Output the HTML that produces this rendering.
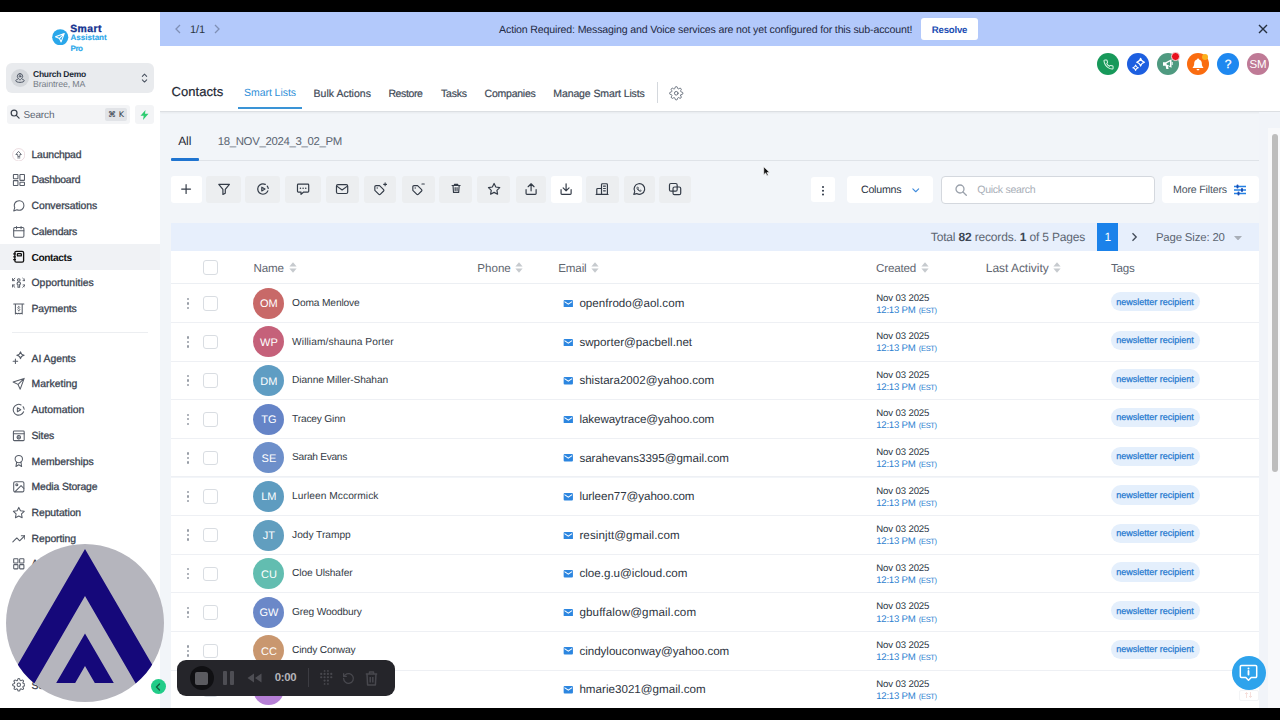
<!DOCTYPE html>
<html lang="en">
<head>
<meta charset="utf-8">
<title>Contacts</title>
<style>
*{box-sizing:border-box;margin:0;padding:0}
html,body{width:1280px;height:720px;overflow:hidden;background:#000;font-family:"Liberation Sans",sans-serif;color:#2b3544;text-rendering:geometricPrecision}
#app{position:absolute;left:0;top:0;width:1280px;height:720px;background:#f2f5f9;overflow:hidden}
.abs{position:absolute}
.t{position:absolute;line-height:1;white-space:nowrap}
.t b{color:#3c4654}
#side{position:absolute;left:0;top:0;width:160px;height:720px;background:#fff}
.navbg{position:absolute;left:0;width:160px;height:26px;background:#f0f2f5}
.ni{position:absolute;left:11.600px;width:13.600px;height:13.600px;stroke:#575d68;fill:none;stroke-width:1.850;stroke-linecap:round;stroke-linejoin:round}
#banner{position:absolute;left:160px;top:12px;width:1120px;height:34px;background:#b3c9fb}
#hdr{position:absolute;left:160px;top:46px;width:1120px;height:65.600px;background:#fff;border-bottom:1px solid #dcdfe3;box-shadow:0 1px 2px rgba(0,0,0,.05)}
.circ{position:absolute;top:52.700px;width:22.600px;height:22.600px;border-radius:50%}
.tb{position:absolute;top:176.300px;height:26.600px;background:#eceef0;border-radius:3px}
.tb.w{background:#fff}
.tb.r{top:175.600px;height:27.900px;border-radius:4px}
.tb svg{position:absolute;left:50%;top:50%;width:14.200px;height:14.200px;margin:-7.800px 0 0 -7.100px;stroke:#333b47;fill:none;stroke-width:2;stroke-linecap:round;stroke-linejoin:round}
.row{position:absolute;left:171px;width:1088px;height:38.620px;background:#fff;border-bottom:1px solid #eef0f4}
.av{position:absolute;left:253.400px;width:31px;height:31px;border-radius:50%}
.mi{position:absolute;left:563.100px;width:10.600px;height:7.600px}
.tg{position:absolute;left:1111px;width:88.800px;height:19.400px;border-radius:10px;background:#e4effc}
.cb{position:absolute;width:14.500px;height:14.500px;border:1px solid #d9dde2;border-radius:3px;background:#fff}
.dots{position:absolute;left:187px;width:3px}
.dots i{display:block;width:2.400px;height:2.400px;border-radius:50%;background:#979da6;margin-bottom:2.100px}
</style>
</head>
<body>
<div id="app">

<div id="banner"></div>
<svg class="abs" style="left:174px;top:24px" width="8" height="10" viewBox="0 0 8 10"><path d="M6 1L2 5l4 4" stroke="#7f8fb5" stroke-width="1.300" fill="none"/></svg>
<div id="t75" class="t" style="left:190px;top:25px;font-size:11px;color:#2b3544;letter-spacing:-0.14px;">1/1</div>
<svg class="abs" style="left:213px;top:24px" width="8" height="10" viewBox="0 0 8 10"><path d="M2 1l4 4-4 4" stroke="#7f8fb5" stroke-width="1.300" fill="none"/></svg>
<div id="t76" class="t" style="left:499.1px;top:25px;font-size:10.6px;color:#1f2a44;letter-spacing:-0.16px;">Action Required: Messaging and Voice services are not yet configured for this sub-account!</div>
<div class="abs" style="left:920.8px;top:17.700px;width:57.700px;height:22.700px;border-radius:3px;background:#fff"></div>
<div id="t77" class="t" style="left:931.8px;top:26px;font-size:9.6px;color:#1b4db3;font-weight:bold;letter-spacing:-0.19px;">Resolve</div>
<svg class="abs" style="left:1258px;top:24px" width="10" height="10" viewBox="0 0 10 10"><path d="M1 1l8 8M9 1L1 9" stroke="#26303f" stroke-width="1.400" fill="none"/></svg>
<div id="hdr"></div>
<div id="t78" class="t" style="left:171.6px;top:85px;font-size:13px;color:#1d2733;letter-spacing:0.04px;-webkit-text-stroke:.2px #1d2733;">Contacts</div>
<div id="t79" class="t" style="left:244px;top:88px;font-size:10.5px;color:#2f8fd8;letter-spacing:-0.05px;">Smart Lists</div>
<div class="abs" style="left:238.400px;top:107.400px;width:63.600px;height:2px;background:#3a94d6"></div>
<div id="t80" class="t" style="left:313.6px;top:89px;font-size:10.5px;color:#414a57;letter-spacing:0.01px;-webkit-text-stroke:.2px #414a57;">Bulk Actions</div>
<div id="t81" class="t" style="left:388.4px;top:89px;font-size:10.5px;color:#414a57;letter-spacing:-0.37px;-webkit-text-stroke:.2px #414a57;">Restore</div>
<div id="t82" class="t" style="left:440.9px;top:89px;font-size:10.5px;color:#414a57;letter-spacing:-0.16px;-webkit-text-stroke:.2px #414a57;">Tasks</div>
<div id="t83" class="t" style="left:484.6px;top:89px;font-size:10.5px;color:#414a57;letter-spacing:-0.24px;-webkit-text-stroke:.2px #414a57;">Companies</div>
<div id="t84" class="t" style="left:553.3px;top:89px;font-size:10.5px;color:#414a57;letter-spacing:-0.11px;-webkit-text-stroke:.2px #414a57;">Manage Smart Lists</div>
<div class="abs" style="left:657px;top:82px;width:1px;height:21px;background:#d4d8dd"></div>
<svg class="abs" style="left:669px;top:86px" width="14.500" height="14.500" viewBox="0 0 24 24" fill="none" stroke="#666e7a" stroke-width="1.600" stroke-linecap="round" stroke-linejoin="round"><circle cx="12" cy="12" r="3"/><path d="M19.400 15a1.650 1.650 0 0 0 .330 1.820l.060.060a2 2 0 1 1-2.830 2.830l-.060-.060a1.650 1.650 0 0 0-1.820-.330 1.650 1.650 0 0 0-1 1.510V21a2 2 0 0 1-4 0v-.090A1.650 1.650 0 0 0 9 19.400a1.650 1.650 0 0 0-1.820.330l-.060.060a2 2 0 1 1-2.830-2.830l.060-.060a1.650 1.650 0 0 0 .330-1.820 1.650 1.650 0 0 0-1.510-1H3a2 2 0 0 1 0-4h.090A1.650 1.650 0 0 0 4.600 9a1.650 1.650 0 0 0-.330-1.820l-.060-.060a2 2 0 1 1 2.830-2.830l.060.060a1.650 1.650 0 0 0 1.820.330H9a1.650 1.650 0 0 0 1-1.510V3a2 2 0 0 1 4 0v.090a1.650 1.650 0 0 0 1 1.510 1.650 1.650 0 0 0 1.820-.330l.060-.060a2 2 0 1 1 2.830 2.830l-.060.060a1.650 1.650 0 0 0-.330 1.820V9a1.650 1.650 0 0 0 1.510 1H21a2 2 0 0 1 0 4h-.090a1.650 1.650 0 0 0-1.510 1z"/></svg>
<div class="circ" style="left:1096.500px;background:#17995a"></div>
<svg class="abs" style="left:1102.500px;top:58.500px" width="11" height="11" viewBox="0 0 24 24" fill="none" stroke="#d9f5e5" stroke-width="2.200" stroke-linecap="round" stroke-linejoin="round"><path d="M22 16.920v3a2 2 0 0 1-2.180 2 19.790 19.790 0 0 1-8.630-3.070 19.500 19.500 0 0 1-6-6 19.790 19.790 0 0 1-3.070-8.670A2 2 0 0 1 4.110 2h3a2 2 0 0 1 2 1.720c.127.960.361 1.903.700 2.810a2 2 0 0 1-.450 2.110L8.090 9.910a16 16 0 0 0 6 6l1.270-1.270a2 2 0 0 1 2.110-.450c.907.339 1.850.573 2.810.700A2 2 0 0 1 22 16.920z"/></svg>
<div class="circ" style="left:1126.500px;background:#1d5fe0"></div>
<svg class="abs" style="left:1130.500px;top:56.500px" width="15" height="15" viewBox="0 0 15 15" fill="none" stroke="#fff" stroke-width="1.100" stroke-linejoin="round"><path d="M9.600 1.200c.5 2.600 1.400 3.500 4 4-2.600.5-3.500 1.400-4 4-.5-2.600-1.400-3.500-4-4 2.600-.5 3.500-1.400 4-4z"/><path d="M4.600 8c.35 1.800.95 2.400 2.750 2.750-1.800.35-2.400.95-2.750 2.750-.35-1.800-.95-2.400-2.750-2.750C3.650 10.400 4.250 9.800 4.600 8z"/></svg>
<div class="circ" style="left:1156.500px;background:#4f9a80"></div>
<svg class="abs" style="left:1162px;top:58px" width="12" height="12" viewBox="0 0 12 12" fill="#fff" stroke="none"><path d="M1 4.200h2.600L9.500 1.300v8.400L6 8l.600 3H4.300L3.600 7.800H1z"/><path d="M4.600 5.200L8 3.600v4.300L4.600 6.500z" fill="#4f9a80"/><path d="M10.200 4v3" stroke="#fff" stroke-width="1" fill="none"/></svg>
<div class="circ" style="left:1186.500px;background:#fa6c10"></div>
<svg class="abs" style="left:1192px;top:57.500px" width="12" height="13" viewBox="0 0 12 13" fill="#fff"><path d="M6 0.500c.600 0 1 .400 1 .900 1.800.500 2.800 2 2.800 3.900 0 2.300.600 3.300 1.500 4.100v.700H.700v-.700c.900-.800 1.500-1.800 1.500-4.100 0-1.900 1-3.400 2.800-3.900 0-.500.400-.900 1-.900z"/><rect x="4.600" y="11" width="2.800" height="1.200" rx=".6"/></svg>
<div class="circ" style="left:1216.500px;background:#1e88f0"></div>
<div class="circ" style="left:1246.500px;background:#bf7a96"></div>
<div class="abs" style="left:1171.300px;top:52.200px;width:8.400px;height:8.400px;border-radius:50%;background:#e8101c;border:.6px solid #f6d9dc"></div>
<div class="abs" style="left:1201.800px;top:54px;width:6px;height:6px;border-radius:50%;background:#fbb01c"></div>
<div id="t123" class="t" style="left:1224.7px;top:58px;font-size:12px;color:#fff;-webkit-text-stroke:.3px #fff;">?</div>
<div id="t124" class="t" style="left:1249.5px;top:60px;font-size:11.5px;color:#fff;letter-spacing:-0.25px;">SM</div>

<!-- list tabs -->
<div id="t85" class="t" style="left:178.2px;top:135px;font-size:12px;color:#1d2733;letter-spacing:-0.07px;">All</div>
<div id="t86" class="t" style="left:217.7px;top:137px;font-size:11.4px;color:#5b6572;letter-spacing:-0.33px;">18_NOV_2024_3_02_PM</div>
<div class="abs" style="left:171px;top:160px;width:1088px;height:1px;background:#dfe3e8"></div>
<div class="abs" style="left:171px;top:157.500px;width:28px;height:3px;background:#1f74d0;border-radius:1px"></div>
<div class="tb w" style="left:171.0px;width:30.5px"><svg viewBox="0 0 24 24"><path d="M12 4.500v15M4.500 12h15"/></svg></div>
<div class="tb" style="left:206.4px;width:34.6px"><svg viewBox="0 0 24 24"><path d="M3 4h18l-7 8.500v6.500l-4 2v-8.500z"/></svg></div>
<div class="tb" style="left:245.3px;width:34.7px"><svg viewBox="0 0 24 24"><path d="M20 15A8.800 8.800 0 1 1 15.700 4"/><path d="M9.800 8.800v6.400l5.400-3.200z"/><path d="M19 6.800a8.800 8.800 0 0 1 1.700 4"/></svg></div>
<div class="tb" style="left:284.7px;width:36.1px"><svg viewBox="0 0 24 24"><path d="M4 3.500h16a1.500 1.500 0 0 1 1.500 1.500v10.500a1.500 1.500 0 0 1-1.500 1.500h-7l-4.500 4v-4H4a1.500 1.500 0 0 1-1.500-1.500V5A1.500 1.500 0 0 1 4 3.500z"/><path d="M7.500 10.500h.01M12 10.500h.01M16.500 10.500h.01" stroke-width="2.600"/></svg></div>
<div class="tb" style="left:325.6px;width:33.1px"><svg viewBox="0 0 24 24"><rect x="2.500" y="4.500" width="19" height="15" rx="2.500"/><path d="M3 7l9 6.500L21 7"/></svg></div>
<div class="tb" style="left:363.5px;width:32.5px"><svg viewBox="0 0 24 24"><g transform="translate(1.500 4.500) scale(.8)"><path d="M20.590 13.410l-7.170 7.170a2 2 0 0 1-2.830 0L2 12V4.500A2.500 2.500 0 0 1 4.500 2H12l8.590 8.590a2 2 0 0 1 0 2.820z" stroke-width="2.400"/><path d="M7 7h.01" stroke-width="2.800"/></g><path d="M20.500 1.500v5M18 4h5" stroke-width="1.800"/></svg></div>
<div class="tb" style="left:401.8px;width:32.8px"><svg viewBox="0 0 24 24"><g transform="translate(1.500 4.500) scale(.8)"><path d="M20.590 13.410l-7.170 7.170a2 2 0 0 1-2.830 0L2 12V4.500A2.500 2.500 0 0 1 4.500 2H12l8.590 8.590a2 2 0 0 1 0 2.820z" stroke-width="2.400"/><path d="M7 7h.01" stroke-width="2.800"/></g><path d="M18.500 3.500h4" stroke-width="1.800"/></svg></div>
<div class="tb" style="left:439.3px;width:33.2px"><svg viewBox="0 0 24 24"><g transform="translate(2.400 1.200) scale(.8)"><path d="M3.500 6h17M8.500 6V3.500h7V6M5.500 6l1 14.500h11l1-14.500M10 10.500v6M14 10.500v6" stroke-width="2.400"/></g></svg></div>
<div class="tb" style="left:477.3px;width:32.7px"><svg viewBox="0 0 24 24"><path d="M12 2.500l2.950 5.980 6.600.960-4.780 4.650 1.130 6.570L12 17.560l-5.900 3.100 1.130-6.570L2.450 9.440l6.600-.960z"/></svg></div>
<div class="tb" style="left:515.6px;width:30.2px"><svg viewBox="0 0 24 24"><path d="M3.500 13v6.500a1.500 1.500 0 0 0 1.500 1.500h14a1.500 1.500 0 0 0 1.500-1.500V13M12 15V3M7 8l5-5 5 5"/></svg></div>
<div class="tb w" style="left:550.6px;width:31.4px"><svg viewBox="0 0 24 24"><path d="M3.500 13v6.500a1.500 1.500 0 0 0 1.500 1.500h14a1.500 1.500 0 0 0 1.500-1.500V13M12 3v12M7 10l5 5 5-5"/></svg></div>
<div class="tb" style="left:586.0px;width:33.0px"><svg viewBox="0 0 24 24"><path d="M11 21V4.500A1.500 1.500 0 0 1 12.500 3h7A1.500 1.500 0 0 1 21 4.500V21M3 21V12.500A1.500 1.500 0 0 1 4.500 11H11M2 21h20M14.500 7h3M14.500 11h3M14.500 15h3"/></svg></div>
<div class="tb" style="left:623.5px;width:31.1px"><svg viewBox="0 0 24 24"><path d="M3 21l1.650-4.800A9 9 0 1 1 8 19.600z"/><path d="M9 8.500c-.300 0-.800.400-.800 1.500 0 2 3 5.500 5.800 5.800 1 .1 1.700-.500 1.700-1.200l-1.900-1-.900.800c-1.200-.500-2.300-1.600-2.800-2.800l.800-.900z" stroke-width="1.300"/></svg></div>
<div class="tb" style="left:659.0px;width:31.7px"><svg viewBox="0 0 24 24"><rect x="8.500" y="8.500" width="13" height="13" rx="2.500"/><rect x="2.500" y="2.500" width="13" height="13" rx="2.500"/></svg></div>
<div class="tb w" style="left:810.800px;width:24.500px;top:177px;height:25px"><div class="abs" style="left:11.300px;top:9px;width:2.400px;height:2.400px;border-radius:50%;background:#2b3544;box-shadow:0 3.800px 0 #2b3544,0 7.600px 0 #2b3544"></div></div>
<div class="tb w r" style="left:846.500px;width:86.300px"><svg class="abs" style="left:65.500px;top:12px;margin:0;width:7.500px;height:5px;stroke:#3f8bdc;stroke-width:1.300" viewBox="0 0 9 6"><path d="M1 1l3.500 3.500L8 1"/></svg></div>
<div class="abs" style="left:940.500px;top:175.500px;width:214px;height:28.500px;background:#fff;border:1px solid #d4d8de;border-radius:4px"></div>
<svg class="abs" style="left:955px;top:184px" width="12" height="12" viewBox="0 0 12 12" fill="none" stroke="#9aa1ab" stroke-width="1.300" stroke-linecap="round"><circle cx="5" cy="5" r="4"/><path d="M8 8l3.300 3.300"/></svg>
<div class="tb w r" style="left:1162.300px;width:96.500px"><svg class="abs" style="left:72px;top:8px;margin:0;width:12px;height:12px;stroke:#2380e4;stroke-width:1.600" viewBox="0 0 12 12"><path d="M0.500 2.500h11M0.500 6h11M0.500 9.500h11"/><path d="M3.500 1.500v2M8 5v2M4.500 8.500v2" stroke="#1b4db3" stroke-width="2"/></svg></div>
<div id="t87" class="t" style="left:861px;top:185px;font-size:10.6px;color:#2b3544;letter-spacing:-0.22px;">Columns</div>
<div id="t88" class="t" style="left:977.2px;top:185px;font-size:10.6px;color:#a9afb8;letter-spacing:-0.30px;">Quick search</div>
<div id="t89" class="t" style="left:1173px;top:185px;font-size:10.6px;color:#4a5361;letter-spacing:-0.17px;">More Filters</div>
<!-- pager -->
<div class="abs" style="left:171px;top:222.600px;width:1088px;height:28.600px;background:#e7effc"></div>
<div id="t90" class="t" style="left:930.8px;top:231px;font-size:12px;color:#5b6572;letter-spacing:-0.17px;">Total <b>82</b> records. <b>1</b> of 5 Pages</div>
<div class="abs" style="left:1097.400px;top:222.600px;width:20.500px;height:28.600px;background:#1b82ea"></div>
<div id="t91" class="t" style="left:1104.4px;top:231px;font-size:12px;color:#fff;">1</div>
<svg class="abs" style="left:1130.500px;top:232px" width="7" height="10" viewBox="0 0 7 10"><path d="M1.500 1.300l3.700 3.700-3.700 3.700" stroke="#424b58" stroke-width="1.350" fill="none"/></svg>
<div id="t92" class="t" style="left:1155.9px;top:233px;font-size:11.4px;color:#5b6572;letter-spacing:-0.16px;">Page Size: 20</div>
<svg class="abs" style="left:1233.500px;top:235.500px" width="8" height="4.500" viewBox="0 0 8 4.500"><path d="M0 0h8L4 4.500z" fill="#a9afb8"/></svg>
<!-- table head -->
<div class="abs" style="left:171px;top:251px;width:1088px;height:33.400px;background:#fff;border-bottom:1px solid #eceff3"></div>
<div class="cb" style="left:203.300px;top:260.100px"></div>
<div id="t93" class="t" style="left:253.5px;top:263px;font-size:11.6px;color:#5f6670;letter-spacing:-0.14px;">Name</div><svg class="abs" style="left:288.5px;top:262px" width="8" height="11" viewBox="0 0 8 11"><path d="M4 0.300L7.600 4.600H0.400z" fill="#c6cace"/><path d="M4 10.700L7.600 6.400H0.400z" fill="#c6cace"/></svg>
<div id="t94" class="t" style="left:477.3px;top:263px;font-size:11.6px;color:#5f6670;letter-spacing:-0.01px;">Phone</div><svg class="abs" style="left:514.5px;top:262px" width="8" height="11" viewBox="0 0 8 11"><path d="M4 0.300L7.600 4.600H0.400z" fill="#c6cace"/><path d="M4 10.700L7.600 6.400H0.400z" fill="#c6cace"/></svg>
<div id="t95" class="t" style="left:558.2px;top:263px;font-size:11.6px;color:#5f6670;letter-spacing:-0.12px;">Email</div><svg class="abs" style="left:591px;top:262px" width="8" height="11" viewBox="0 0 8 11"><path d="M4 0.300L7.600 4.600H0.400z" fill="#c6cace"/><path d="M4 10.700L7.600 6.400H0.400z" fill="#c6cace"/></svg>
<div id="t96" class="t" style="left:876.1px;top:263px;font-size:11.6px;color:#5f6670;letter-spacing:-0.18px;">Created</div><svg class="abs" style="left:921.2px;top:262px" width="8" height="11" viewBox="0 0 8 11"><path d="M4 0.300L7.600 4.600H0.400z" fill="#c6cace"/><path d="M4 10.700L7.600 6.400H0.400z" fill="#c6cace"/></svg>
<div id="t97" class="t" style="left:985.8px;top:262px;font-size:12px;color:#5f6670;letter-spacing:-0.04px;">Last Activity</div><svg class="abs" style="left:1053px;top:262px" width="8" height="11" viewBox="0 0 8 11"><path d="M4 0.300L7.600 4.600H0.400z" fill="#c6cace"/><path d="M4 10.700L7.600 6.400H0.400z" fill="#c6cace"/></svg>
<div id="t98" class="t" style="left:1110.9px;top:263px;font-size:11.6px;color:#5b6572;letter-spacing:-0.16px;">Tags</div>
<div class="row" style="top:284.40px"></div><div class="dots" style="top:297.70px"><i></i><i></i><i></i></div><div class="cb" style="left:203.3px;top:296.20px"></div><div class="av" style="top:287.80px;background:#c86968"></div><div id="t1" class="t" style="left:253.4px;top:299px;font-size:11px;color:#fff;width:31px;text-align:center;">OM</div><div id="t2" class="t" style="left:292.1px;top:299px;font-size:10.2px;color:#343b46;letter-spacing:-0.13px;">Ooma Menlove</div><svg class="mi" style="top:299.90px" viewBox="0 0 11 9"><rect width="11" height="9" rx="1.2" fill="#2c86e0"/><path d="M1 2l4.5 3L10 2" stroke="#fff" stroke-width="1.2" fill="none"/></svg><div id="t3" class="t" style="left:579.4px;top:298px;font-size:11.6px;color:#2d343e;letter-spacing:0.02px;">openfrodo@aol.com</div><div id="t4" class="t" style="left:876.2px;top:294px;font-size:9.6px;color:#2b3544;letter-spacing:-0.12px;">Nov 03 2025</div><div id="t5" class="t" style="left:876.2px;top:306px;font-size:9.6px;color:#2e7fd0;letter-spacing:-0.23px;">12:13 PM</div><div id="t6" class="t" style="left:918.8px;top:307px;font-size:7.6px;color:#2e7fd0;letter-spacing:-0.38px;">(EST)</div><div class="tg" style="top:292.10px"></div><div id="t7" class="t" style="left:1116.3px;top:298px;font-size:9px;color:#2579cf;-webkit-text-stroke:.25px #2579cf;">newsletter recipient</div>
<div class="row" style="top:323.02px"></div><div class="dots" style="top:336.32px"><i></i><i></i><i></i></div><div class="cb" style="left:203.3px;top:334.82px"></div><div class="av" style="top:326.42px;background:#c5617a"></div><div id="t8" class="t" style="left:253.4px;top:338px;font-size:11px;color:#fff;width:31px;text-align:center;">WP</div><div id="t9" class="t" style="left:292.1px;top:338px;font-size:10.2px;color:#343b46;letter-spacing:0.09px;">William/shauna Porter</div><svg class="mi" style="top:338.52px" viewBox="0 0 11 9"><rect width="11" height="9" rx="1.2" fill="#2c86e0"/><path d="M1 2l4.5 3L10 2" stroke="#fff" stroke-width="1.2" fill="none"/></svg><div id="t10" class="t" style="left:579.4px;top:337px;font-size:11.6px;color:#2d343e;letter-spacing:0.02px;">swporter@pacbell.net</div><div id="t11" class="t" style="left:876.2px;top:332px;font-size:9.6px;color:#2b3544;letter-spacing:-0.12px;">Nov 03 2025</div><div id="t12" class="t" style="left:876.2px;top:344px;font-size:9.6px;color:#2e7fd0;letter-spacing:-0.23px;">12:13 PM</div><div id="t13" class="t" style="left:918.8px;top:345px;font-size:7.6px;color:#2e7fd0;letter-spacing:-0.38px;">(EST)</div><div class="tg" style="top:330.72px"></div><div id="t14" class="t" style="left:1116.3px;top:336px;font-size:9px;color:#2579cf;-webkit-text-stroke:.25px #2579cf;">newsletter recipient</div>
<div class="row" style="top:361.64px"></div><div class="dots" style="top:374.94px"><i></i><i></i><i></i></div><div class="cb" style="left:203.3px;top:373.44px"></div><div class="av" style="top:365.04px;background:#5f9dc3"></div><div id="t15" class="t" style="left:253.4px;top:377px;font-size:11px;color:#fff;width:31px;text-align:center;">DM</div><div id="t16" class="t" style="left:292.1px;top:376px;font-size:10.2px;color:#343b46;letter-spacing:-0.10px;">Dianne Miller-Shahan</div><svg class="mi" style="top:377.14px" viewBox="0 0 11 9"><rect width="11" height="9" rx="1.2" fill="#2c86e0"/><path d="M1 2l4.5 3L10 2" stroke="#fff" stroke-width="1.2" fill="none"/></svg><div id="t17" class="t" style="left:579.4px;top:375px;font-size:11.6px;color:#2d343e;letter-spacing:-0.01px;">shistara2002@yahoo.com</div><div id="t18" class="t" style="left:876.2px;top:371px;font-size:9.6px;color:#2b3544;letter-spacing:-0.12px;">Nov 03 2025</div><div id="t19" class="t" style="left:876.2px;top:383px;font-size:9.6px;color:#2e7fd0;letter-spacing:-0.23px;">12:13 PM</div><div id="t20" class="t" style="left:918.8px;top:384px;font-size:7.6px;color:#2e7fd0;letter-spacing:-0.38px;">(EST)</div><div class="tg" style="top:369.34px"></div><div id="t21" class="t" style="left:1116.3px;top:375px;font-size:9px;color:#2579cf;-webkit-text-stroke:.25px #2579cf;">newsletter recipient</div>
<div class="row" style="top:400.26px"></div><div class="dots" style="top:413.56px"><i></i><i></i><i></i></div><div class="cb" style="left:203.3px;top:412.06px"></div><div class="av" style="top:403.66px;background:#6584c7"></div><div id="t22" class="t" style="left:253.4px;top:415px;font-size:11px;color:#fff;width:31px;text-align:center;">TG</div><div id="t23" class="t" style="left:292.1px;top:415px;font-size:10.2px;color:#343b46;letter-spacing:-0.19px;">Tracey Ginn</div><svg class="mi" style="top:415.76px" viewBox="0 0 11 9"><rect width="11" height="9" rx="1.2" fill="#2c86e0"/><path d="M1 2l4.5 3L10 2" stroke="#fff" stroke-width="1.2" fill="none"/></svg><div id="t24" class="t" style="left:579.4px;top:414px;font-size:11.6px;color:#2d343e;letter-spacing:-0.06px;">lakewaytrace@yahoo.com</div><div id="t25" class="t" style="left:876.2px;top:409px;font-size:9.6px;color:#2b3544;letter-spacing:-0.12px;">Nov 03 2025</div><div id="t26" class="t" style="left:876.2px;top:421px;font-size:9.6px;color:#2e7fd0;letter-spacing:-0.23px;">12:13 PM</div><div id="t27" class="t" style="left:918.8px;top:422px;font-size:7.6px;color:#2e7fd0;letter-spacing:-0.38px;">(EST)</div><div class="tg" style="top:407.96px"></div><div id="t28" class="t" style="left:1116.3px;top:413px;font-size:9px;color:#2579cf;-webkit-text-stroke:.25px #2579cf;">newsletter recipient</div>
<div class="row" style="top:438.88px"></div><div class="dots" style="top:452.18px"><i></i><i></i><i></i></div><div class="cb" style="left:203.3px;top:450.68px"></div><div class="av" style="top:442.28px;background:#6d8fca"></div><div id="t29" class="t" style="left:253.4px;top:454px;font-size:11px;color:#fff;width:31px;text-align:center;">SE</div><div id="t30" class="t" style="left:292.1px;top:453px;font-size:10.2px;color:#343b46;letter-spacing:-0.31px;">Sarah Evans</div><svg class="mi" style="top:454.38px" viewBox="0 0 11 9"><rect width="11" height="9" rx="1.2" fill="#2c86e0"/><path d="M1 2l4.5 3L10 2" stroke="#fff" stroke-width="1.2" fill="none"/></svg><div id="t31" class="t" style="left:579.4px;top:453px;font-size:11.6px;color:#2d343e;letter-spacing:-0.03px;">sarahevans3395@gmail.com</div><div id="t32" class="t" style="left:876.2px;top:448px;font-size:9.6px;color:#2b3544;letter-spacing:-0.12px;">Nov 03 2025</div><div id="t33" class="t" style="left:876.2px;top:460px;font-size:9.6px;color:#2e7fd0;letter-spacing:-0.23px;">12:13 PM</div><div id="t34" class="t" style="left:918.8px;top:461px;font-size:7.6px;color:#2e7fd0;letter-spacing:-0.38px;">(EST)</div><div class="tg" style="top:446.58px"></div><div id="t35" class="t" style="left:1116.3px;top:452px;font-size:9px;color:#2579cf;-webkit-text-stroke:.25px #2579cf;">newsletter recipient</div>
<div class="row" style="top:477.50px"></div><div class="dots" style="top:490.80px"><i></i><i></i><i></i></div><div class="cb" style="left:203.3px;top:489.30px"></div><div class="av" style="top:480.90px;background:#5e9cc0"></div><div id="t36" class="t" style="left:253.4px;top:492px;font-size:11px;color:#fff;width:31px;text-align:center;">LM</div><div id="t37" class="t" style="left:292.1px;top:492px;font-size:10.2px;color:#343b46;letter-spacing:0.05px;">Lurleen Mccormick</div><svg class="mi" style="top:493.00px" viewBox="0 0 11 9"><rect width="11" height="9" rx="1.2" fill="#2c86e0"/><path d="M1 2l4.5 3L10 2" stroke="#fff" stroke-width="1.2" fill="none"/></svg><div id="t38" class="t" style="left:579.4px;top:491px;font-size:11.6px;color:#2d343e;letter-spacing:-0.06px;">lurleen77@yahoo.com</div><div id="t39" class="t" style="left:876.2px;top:487px;font-size:9.6px;color:#2b3544;letter-spacing:-0.12px;">Nov 03 2025</div><div id="t40" class="t" style="left:876.2px;top:499px;font-size:9.6px;color:#2e7fd0;letter-spacing:-0.23px;">12:13 PM</div><div id="t41" class="t" style="left:918.8px;top:500px;font-size:7.6px;color:#2e7fd0;letter-spacing:-0.38px;">(EST)</div><div class="tg" style="top:485.20px"></div><div id="t42" class="t" style="left:1116.3px;top:491px;font-size:9px;color:#2579cf;-webkit-text-stroke:.25px #2579cf;">newsletter recipient</div>
<div class="row" style="top:516.12px"></div><div class="dots" style="top:529.42px"><i></i><i></i><i></i></div><div class="cb" style="left:203.3px;top:527.92px"></div><div class="av" style="top:519.52px;background:#619ebf"></div><div id="t43" class="t" style="left:253.4px;top:531px;font-size:11px;color:#fff;width:31px;text-align:center;">JT</div><div id="t44" class="t" style="left:292.1px;top:531px;font-size:10.2px;color:#343b46;letter-spacing:-0.03px;">Jody Trampp</div><svg class="mi" style="top:531.62px" viewBox="0 0 11 9"><rect width="11" height="9" rx="1.2" fill="#2c86e0"/><path d="M1 2l4.5 3L10 2" stroke="#fff" stroke-width="1.2" fill="none"/></svg><div id="t45" class="t" style="left:579.4px;top:530px;font-size:11.6px;color:#2d343e;letter-spacing:0.09px;">resinjtt@gmail.com</div><div id="t46" class="t" style="left:876.2px;top:525px;font-size:9.6px;color:#2b3544;letter-spacing:-0.12px;">Nov 03 2025</div><div id="t47" class="t" style="left:876.2px;top:537px;font-size:9.6px;color:#2e7fd0;letter-spacing:-0.23px;">12:13 PM</div><div id="t48" class="t" style="left:918.8px;top:538px;font-size:7.6px;color:#2e7fd0;letter-spacing:-0.38px;">(EST)</div><div class="tg" style="top:523.82px"></div><div id="t49" class="t" style="left:1116.3px;top:529px;font-size:9px;color:#2579cf;-webkit-text-stroke:.25px #2579cf;">newsletter recipient</div>
<div class="row" style="top:554.74px"></div><div class="dots" style="top:568.04px"><i></i><i></i><i></i></div><div class="cb" style="left:203.3px;top:566.54px"></div><div class="av" style="top:558.14px;background:#62bdb0"></div><div id="t50" class="t" style="left:253.4px;top:570px;font-size:11px;color:#fff;width:31px;text-align:center;">CU</div><div id="t51" class="t" style="left:292.1px;top:569px;font-size:10.2px;color:#343b46;letter-spacing:-0.10px;">Cloe Ulshafer</div><svg class="mi" style="top:570.24px" viewBox="0 0 11 9"><rect width="11" height="9" rx="1.2" fill="#2c86e0"/><path d="M1 2l4.5 3L10 2" stroke="#fff" stroke-width="1.2" fill="none"/></svg><div id="t52" class="t" style="left:579.4px;top:568px;font-size:11.6px;color:#2d343e;letter-spacing:0.01px;">cloe.g.u@icloud.com</div><div id="t53" class="t" style="left:876.2px;top:564px;font-size:9.6px;color:#2b3544;letter-spacing:-0.12px;">Nov 03 2025</div><div id="t54" class="t" style="left:876.2px;top:576px;font-size:9.6px;color:#2e7fd0;letter-spacing:-0.23px;">12:13 PM</div><div id="t55" class="t" style="left:918.8px;top:577px;font-size:7.6px;color:#2e7fd0;letter-spacing:-0.38px;">(EST)</div><div class="tg" style="top:562.44px"></div><div id="t56" class="t" style="left:1116.3px;top:568px;font-size:9px;color:#2579cf;-webkit-text-stroke:.25px #2579cf;">newsletter recipient</div>
<div class="row" style="top:593.36px"></div><div class="dots" style="top:606.66px"><i></i><i></i><i></i></div><div class="cb" style="left:203.3px;top:605.16px"></div><div class="av" style="top:596.76px;background:#6b88c8"></div><div id="t57" class="t" style="left:253.4px;top:608px;font-size:11px;color:#fff;width:31px;text-align:center;">GW</div><div id="t58" class="t" style="left:292.1px;top:608px;font-size:10.2px;color:#343b46;letter-spacing:-0.17px;">Greg Woodbury</div><svg class="mi" style="top:608.86px" viewBox="0 0 11 9"><rect width="11" height="9" rx="1.2" fill="#2c86e0"/><path d="M1 2l4.5 3L10 2" stroke="#fff" stroke-width="1.2" fill="none"/></svg><div id="t59" class="t" style="left:579.4px;top:607px;font-size:11.6px;color:#2d343e;letter-spacing:0.15px;">gbuffalow@gmail.com</div><div id="t60" class="t" style="left:876.2px;top:602px;font-size:9.6px;color:#2b3544;letter-spacing:-0.12px;">Nov 03 2025</div><div id="t61" class="t" style="left:876.2px;top:615px;font-size:9.6px;color:#2e7fd0;letter-spacing:-0.23px;">12:13 PM</div><div id="t62" class="t" style="left:918.8px;top:616px;font-size:7.6px;color:#2e7fd0;letter-spacing:-0.38px;">(EST)</div><div class="tg" style="top:601.06px"></div><div id="t63" class="t" style="left:1116.3px;top:607px;font-size:9px;color:#2579cf;-webkit-text-stroke:.25px #2579cf;">newsletter recipient</div>
<div class="row" style="top:631.98px"></div><div class="dots" style="top:645.28px"><i></i><i></i><i></i></div><div class="cb" style="left:203.3px;top:643.78px"></div><div class="av" style="top:635.38px;background:#c9976f"></div><div id="t64" class="t" style="left:253.4px;top:647px;font-size:11px;color:#fff;width:31px;text-align:center;">CC</div><div id="t65" class="t" style="left:292.1px;top:646px;font-size:10.2px;color:#343b46;letter-spacing:-0.20px;">Cindy Conway</div><svg class="mi" style="top:647.48px" viewBox="0 0 11 9"><rect width="11" height="9" rx="1.2" fill="#2c86e0"/><path d="M1 2l4.5 3L10 2" stroke="#fff" stroke-width="1.2" fill="none"/></svg><div id="t66" class="t" style="left:579.4px;top:646px;font-size:11.6px;color:#2d343e;letter-spacing:-0.02px;">cindylouconway@yahoo.com</div><div id="t67" class="t" style="left:876.2px;top:641px;font-size:9.6px;color:#2b3544;letter-spacing:-0.12px;">Nov 03 2025</div><div id="t68" class="t" style="left:876.2px;top:653px;font-size:9.6px;color:#2e7fd0;letter-spacing:-0.23px;">12:13 PM</div><div id="t69" class="t" style="left:918.8px;top:654px;font-size:7.6px;color:#2e7fd0;letter-spacing:-0.38px;">(EST)</div><div class="tg" style="top:639.68px"></div><div id="t70" class="t" style="left:1116.3px;top:645px;font-size:9px;color:#2579cf;-webkit-text-stroke:.25px #2579cf;">newsletter recipient</div>
<div class="row" style="top:670.60px"></div><div class="dots" style="top:683.90px"><i></i><i></i><i></i></div><div class="cb" style="left:203.3px;top:682.40px"></div><div class="av" style="top:674.00px;background:#b680d6"></div><svg class="mi" style="top:686.10px" viewBox="0 0 11 9"><rect width="11" height="9" rx="1.2" fill="#2c86e0"/><path d="M1 2l4.5 3L10 2" stroke="#fff" stroke-width="1.2" fill="none"/></svg><div id="t71" class="t" style="left:579.4px;top:684px;font-size:11.6px;color:#2d343e;letter-spacing:0.02px;">hmarie3021@gmail.com</div><div id="t72" class="t" style="left:876.2px;top:680px;font-size:9.6px;color:#2b3544;letter-spacing:-0.12px;">Nov 03 2025</div><div id="t73" class="t" style="left:876.2px;top:692px;font-size:9.6px;color:#2e7fd0;letter-spacing:-0.23px;">12:13 PM</div><div id="t74" class="t" style="left:918.8px;top:693px;font-size:7.6px;color:#2e7fd0;letter-spacing:-0.38px;">(EST)</div>
<!-- scrollbar -->
<div class="abs" style="left:1259px;top:112px;width:21px;height:596px;background:#f1f4f9"></div>
<div class="abs" style="left:1268px;top:128px;width:12px;height:580px;background:#f8f9fb"></div>
<div class="abs" style="left:1272px;top:134.200px;width:6px;height:337.500px;border-radius:3px;background:#bdbdbd"></div>

<div id="side">
 <!-- logo -->
 <svg class="abs" style="left:52.200px;top:28.800px" width="16.500" height="16.500" viewBox="0 0 17 17"><circle cx="8.5" cy="8.5" r="8.3" fill="#2aa7ea"/><path d="M3.6 8.1l9-3.4-3.2 8.6-1.7-3.6zM7.7 9.7l4.9-5" fill="none" stroke="#fff" stroke-width="1.1" stroke-linejoin="round"/></svg>
<div id="t116" class="t" style="left:70.2px;top:25px;font-size:10.4px;color:#12318f;font-weight:bold;letter-spacing:0.44px;-webkit-text-stroke:.3px #12318f;">Smart</div>
<div id="t117" class="t" style="left:70.5px;top:34px;font-size:8px;color:#2aa7ea;font-weight:bold;letter-spacing:0.02px;-webkit-text-stroke:.15px #2aa7ea;">Assistant</div>
<div id="t118" class="t" style="left:70.5px;top:45px;font-size:8px;color:#2aa7ea;font-weight:bold;letter-spacing:-0.42px;-webkit-text-stroke:.15px #2aa7ea;">Pro</div>
 <!-- account -->
 <div class="abs" style="left:6px;top:63px;width:148px;height:30px;border-radius:6px;background:#e9ebee"></div>
 <div class="abs" style="left:11px;top:69px;width:18px;height:18px;border-radius:50%;background:#d5d8dc"></div>
 <svg class="abs" style="left:15px;top:73px" width="10" height="10" viewBox="0 0 24 24" fill="none" stroke="#4a5361" stroke-width="2.300" stroke-linecap="round" stroke-linejoin="round"><path d="M12 1.500a6.500 6.500 0 0 1 6.500 6.500c0 4-6.500 9-6.500 9S5.500 12 5.500 8A6.500 6.500 0 0 1 12 1.500z"/><circle cx="12" cy="8" r="2"/><path d="M6 15c-2.500.800-4 2-4 3.500 0 2.500 4.500 4 10 4s10-1.500 10-4c0-1.500-1.500-2.700-4-3.500"/></svg>
<div id="t119" class="t" style="left:33px;top:70px;font-size:8.5px;color:#222b38;font-weight:bold;letter-spacing:-0.26px;">Church Demo</div>
<div id="t120" class="t" style="left:33px;top:80px;font-size:8.8px;color:#777d87;letter-spacing:-0.11px;">Braintree, MA</div>
 <svg class="abs" style="left:140.600px;top:72px" width="7" height="12.200" viewBox="0 0 8 14" fill="none" stroke="#4a5361" stroke-width="1.200" stroke-linecap="round" stroke-linejoin="round"><path d="M1.500 5L4 2.500 6.500 5M1.500 9L4 11.500 6.500 9"/></svg>
 <!-- search -->
 <div class="abs" style="left:7px;top:105px;width:123px;height:19px;border-radius:3px;background:#f3f4f6"></div>
 <svg class="abs" style="left:10px;top:109px" width="10" height="10" viewBox="0 0 11 11" fill="none" stroke="#3a414c" stroke-width="1.350" stroke-linecap="round"><circle cx="4.500" cy="4.500" r="3.200"/><path d="M7 7l3 3"/></svg>
<div id="t121" class="t" style="left:23.5px;top:111px;font-size:10px;color:#5b6572;letter-spacing:-0.14px;">Search</div>
 <div class="abs" style="left:105px;top:108px;width:22px;height:13px;border-radius:2px;background:#e1e3e7;font-size:8px;line-height:13px;color:#2b3544;text-align:center;white-space:nowrap;font-family:'DejaVu Sans','Liberation Sans',sans-serif">⌘ K</div>
 <div class="abs" style="left:135px;top:105px;width:19px;height:19px;border-radius:3px;background:#f3f4f6"></div>
 <svg class="abs" style="left:140px;top:110px" width="9" height="10" viewBox="0 0 9 10"><path d="M5.500 0L0.500 5.800h3.200L3 10l5.500-6.200H5z" fill="#2ecc71"/></svg>
 <svg class="ni" viewBox="0 0 24 24" style="top:147.5px"><circle cx="12" cy="12" r="11" stroke="#e6d3d8" stroke-width="1.400"/><path d="M12 6.500l4.500 5h-2.600v3.500h-3.800v-3.500H7.500zM10.100 17.500h3.800" stroke-width="1.500"/></svg>
<div id="t99" class="t" style="left:31.5px;top:151px;font-size:10.4px;color:#3a4350;letter-spacing:-0.18px;-webkit-text-stroke:.3px #3a4350;">Launchpad</div>
 <svg class="ni" viewBox="0 0 24 24" style="top:173.2px"><rect x="2.500" y="2.500" width="8" height="7.500" rx=".8"/><rect x="14" y="2.500" width="8" height="10.500" rx=".8"/><rect x="2.500" y="13.500" width="8" height="8.500" rx=".8"/><rect x="14" y="16.500" width="8" height="5.500" rx=".8"/></svg>
<div id="t100" class="t" style="left:31.5px;top:176px;font-size:10.4px;color:#3a4350;letter-spacing:-0.24px;-webkit-text-stroke:.3px #3a4350;">Dashboard</div>
 <svg class="ni" viewBox="0 0 24 24" style="top:198.9px"><path d="M21 11.500a8.400 8.400 0 0 1-.900 3.800 8.500 8.500 0 0 1-7.600 4.700 8.400 8.400 0 0 1-3.800-.900L3 21l1.900-5.700a8.400 8.400 0 0 1-.900-3.800 8.500 8.500 0 0 1 4.700-7.600 8.400 8.400 0 0 1 3.800-.900h.500a8.480 8.480 0 0 1 8 8v.500z"/></svg>
<div id="t101" class="t" style="left:31.5px;top:202px;font-size:10.4px;color:#3a4350;letter-spacing:-0.07px;-webkit-text-stroke:.3px #3a4350;">Conversations</div>
 <svg class="ni" viewBox="0 0 24 24" style="top:224.6px"><rect x="3" y="4.500" width="18" height="17" rx="2"/><path d="M16 2.500v4M8 2.500v4M3 10h18"/></svg>
<div id="t102" class="t" style="left:31.5px;top:228px;font-size:10.4px;color:#3a4350;letter-spacing:-0.20px;-webkit-text-stroke:.3px #3a4350;">Calendars</div>
 <div class="navbg" style="top:244.4px"></div>
 <svg class="ni" viewBox="0 0 24 24" style="top:250.4px;stroke:#111;stroke-width:2.300"><rect x="5" y="2.500" width="15.500" height="19" rx="2.500"/><path d="M3 7h3M3 12h3M3 17h3"/><rect x="9.500" y="6.500" width="7" height="4" rx="1"/></svg>
<div id="t103" class="t" style="left:31.6px;top:254px;font-size:10.2px;color:#111;font-weight:bold;letter-spacing:-0.43px;">Contacts</div>
 <svg class="ni" viewBox="0 0 24 24" style="top:276.1px"><circle cx="12" cy="7" r="2.300"/><path d="M8.800 14c0-2 1.300-3.300 3.200-3.300s3.200 1.300 3.200 3.300l-1.700.800v5h-3v-5z"/><path d="M.800 4.500v3.700h3.700M1 8l4-4M23.200 4.500v3.700h-3.700M23 8l-4-4M.800 19.500v-3.700h3.700M1 16l4 4M23.200 19.500v-3.700h-3.700M23 16l-4 4" stroke-width="1.700"/></svg>
<div id="t104" class="t" style="left:31.5px;top:279px;font-size:10.4px;color:#3a4350;letter-spacing:0.04px;-webkit-text-stroke:.3px #3a4350;">Opportunities</div>
 <svg class="ni" viewBox="0 0 24 24" style="top:301.8px"><path d="M3 3.500h18M6 3.500v17.500l2-1.200 2 1.200 2-1.200 2 1.200 2-1.200 2 1.200V3.500"/><path d="M13.800 9.500c-.400-.700-1-1-1.800-1-1.100 0-2 .600-2 1.600 0 2.200 4 1 4 3.200 0 1-.900 1.600-2 1.600-.900 0-1.600-.400-2-1.100M12 7.500v1M12 15v1" stroke-width="1.300"/></svg>
<div id="t105" class="t" style="left:31.5px;top:305px;font-size:10.4px;color:#3a4350;letter-spacing:-0.13px;-webkit-text-stroke:.3px #3a4350;">Payments</div>
 <svg class="ni" viewBox="0 0 24 24" style="top:351.3px"><path d="M15 1.500c.600 3.600 2.400 5.400 6.500 6-4.100.600-5.900 2.400-6.500 6-.600-3.600-2.400-5.400-6.500-6 4.100-.600 5.900-2.400 6.500-6z"/><path d="M6 14v8M2 18h8"/></svg>
<div id="t106" class="t" style="left:31.5px;top:355px;font-size:10.4px;color:#3a4350;letter-spacing:-0.04px;-webkit-text-stroke:.3px #3a4350;">AI Agents</div>
 <svg class="ni" viewBox="0 0 24 24" style="top:377.1px"><path d="M21.500 2.500L10.500 13.500M21.500 2.500l-7 19-4-8.500-8.500-4z"/></svg>
<div id="t107" class="t" style="left:31.5px;top:380px;font-size:10.4px;color:#3a4350;letter-spacing:0.02px;-webkit-text-stroke:.3px #3a4350;">Marketing</div>
 <svg class="ni" viewBox="0 0 24 24" style="top:402.8px"><path d="M20.500 15.500A9.500 9.500 0 1 1 16 3.400"/><path d="M9.500 8.500v7l6-3.500z"/><path d="M19.500 6.500a9.500 9.500 0 0 1 1.900 4.500" /></svg>
<div id="t108" class="t" style="left:31.5px;top:406px;font-size:10.4px;color:#3a4350;letter-spacing:0.03px;-webkit-text-stroke:.3px #3a4350;">Automation</div>
 <svg class="ni" viewBox="0 0 24 24" style="top:428.5px"><rect x="2.500" y="3.500" width="19" height="17" rx="1.500"/><path d="M2.500 8.500h19"/><circle cx="12" cy="14.500" r="3"/><path d="M9 14.500h6M12 11.500v6" stroke-width="1.200"/></svg>
<div id="t109" class="t" style="left:31.5px;top:432px;font-size:10.4px;color:#3a4350;letter-spacing:-0.07px;-webkit-text-stroke:.3px #3a4350;">Sites</div>
 <svg class="ni" viewBox="0 0 24 24" style="top:454.3px"><circle cx="12" cy="9" r="6.500"/><path d="M8.200 14.300L7 22l5-3 5 3-1.200-7.700"/></svg>
<div id="t110" class="t" style="left:31.5px;top:458px;font-size:10.4px;color:#3a4350;letter-spacing:-0.02px;-webkit-text-stroke:.3px #3a4350;">Memberships</div>
 <svg class="ni" viewBox="0 0 24 24" style="top:480.0px"><rect x="3" y="3" width="18" height="18" rx="2.500"/><circle cx="8.500" cy="8.500" r="1.800"/><path d="M21 15l-5-5L5 21"/></svg>
<div id="t111" class="t" style="left:31.5px;top:483px;font-size:10.4px;color:#3a4350;letter-spacing:-0.13px;-webkit-text-stroke:.3px #3a4350;">Media Storage</div>
 <svg class="ni" viewBox="0 0 24 24" style="top:505.7px"><path d="M12 2.500l2.950 5.980 6.600.960-4.780 4.650 1.130 6.570L12 17.560l-5.900 3.100 1.130-6.570L2.450 9.440l6.600-.960z"/></svg>
<div id="t112" class="t" style="left:31.5px;top:509px;font-size:10.4px;color:#3a4350;letter-spacing:-0.07px;-webkit-text-stroke:.3px #3a4350;">Reputation</div>
 <svg class="ni" viewBox="0 0 24 24" style="top:531.5px"><path d="M22.500 6.500l-9 9-5-5-7 7"/><path d="M16.500 6.500h6v6"/></svg>
<div id="t113" class="t" style="left:31.5px;top:535px;font-size:10.4px;color:#3a4350;letter-spacing:-0.06px;-webkit-text-stroke:.3px #3a4350;">Reporting</div>
 <svg class="ni" viewBox="0 0 24 24" style="top:557.2px"><rect x="3" y="3" width="7.500" height="7.500" rx="1"/><rect x="13.500" y="3" width="7.500" height="7.500" rx="1"/><rect x="3" y="13.500" width="7.500" height="7.500" rx="1"/><rect x="13.500" y="13.500" width="7.500" height="7.500" rx="1"/></svg>
<div id="t114" class="t" style="left:31.5px;top:560px;font-size:10.4px;color:#3a4350;-webkit-text-stroke:.3px #3a4350;">App Marketplace</div>
 <svg class="ni" viewBox="0 0 24 24" style="top:678.3px"><circle cx="12" cy="12" r="3"/><path d="M19.400 15a1.650 1.650 0 0 0 .330 1.820l.060.060a2 2 0 1 1-2.830 2.830l-.060-.060a1.650 1.650 0 0 0-1.820-.330 1.650 1.650 0 0 0-1 1.510V21a2 2 0 0 1-4 0v-.090A1.650 1.650 0 0 0 9 19.400a1.650 1.650 0 0 0-1.820.330l-.060.060a2 2 0 1 1-2.830-2.830l.060-.060a1.650 1.650 0 0 0 .330-1.820 1.650 1.650 0 0 0-1.510-1H3a2 2 0 0 1 0-4h.090A1.650 1.650 0 0 0 4.600 9a1.650 1.650 0 0 0-.330-1.820l-.060-.060a2 2 0 1 1 2.830-2.830l.060.060a1.650 1.650 0 0 0 1.820.330H9a1.650 1.650 0 0 0 1-1.510V3a2 2 0 0 1 4 0v.090a1.650 1.650 0 0 0 1 1.510 1.650 1.650 0 0 0 1.820-.330l.060-.060a2 2 0 1 1 2.830 2.830l-.060.060a1.650 1.650 0 0 0-.330 1.820V9a1.650 1.650 0 0 0 1.510 1H21a2 2 0 0 1 0 4h-.090a1.650 1.650 0 0 0-1.510 1z"/></svg>
<div id="t115" class="t" style="left:31.5px;top:682px;font-size:10.4px;color:#3a4350;-webkit-text-stroke:.3px #3a4350;">Settings</div>
 <div class="abs" style="left:12px;top:332px;width:136px;height:1px;background:#eceef1"></div>
</div>

<!-- green collapse -->
<div class="abs" style="left:151px;top:679px;width:15px;height:15px;border-radius:50%;background:#22cc88"></div>
<svg class="abs" style="left:155px;top:682.500px" width="6" height="8" viewBox="0 0 6 8"><path d="M4.500 1L1.500 4l3 3" stroke="#135c3c" stroke-width="1.300" fill="none" stroke-linecap="round"/></svg>
<!-- big avatar circle -->
<svg class="abs" style="left:6px;top:544px" width="158" height="158" viewBox="6 544 158 158"><defs><clipPath id="cc"><circle cx="85" cy="623" r="79"/></clipPath></defs><circle cx="85" cy="623" r="79" fill="#b5b5bd"/><g clip-path="url(#cc)" fill="#15087a"><path d="M85 549L-8 709h27.500L85 596l65.500 113H178z"/><path d="M85 633.500L56.200 683h19L85 666l9.800 17h19z"/></g></svg>
<!-- recorder -->
<div class="abs" style="left:177px;top:659.500px;width:217.500px;height:36.500px;border-radius:9px;background:#25252a"></div>
<div class="abs" style="left:189.500px;top:666px;width:24px;height:24px;border-radius:50%;background:#101013"></div>
<div class="abs" style="left:195px;top:671.500px;width:13px;height:13px;border-radius:2px;background:#5b5b60"></div>
<div class="abs" style="left:223px;top:671px;width:4px;height:13.500px;border-radius:1px;background:#4e4e54"></div>
<div class="abs" style="left:230px;top:671px;width:4px;height:13.500px;border-radius:1px;background:#4e4e54"></div>
<svg class="abs" style="left:247px;top:673px" width="15" height="10" viewBox="0 0 15 10"><path d="M7 0.500v9L0.500 5zM14.500 0.500v9L8 5z" fill="#4e4e54"/></svg>
<div id="t122" class="t" style="left:274.7px;top:673px;font-size:11.4px;color:#b4b4b9;font-weight:bold;letter-spacing:-0.30px;">0:00</div>
<div class="abs" style="left:308px;top:668px;width:1px;height:19px;background:#3c3c42"></div>
<svg class="abs" style="left:319px;top:670.300px" width="14.500" height="15.600" viewBox="0 0 13 14" fill="#48484e"><circle cx="2" cy="3.500" r="1"/><circle cx="5" cy="3.500" r="1"/><circle cx="8" cy="3.500" r="1"/><circle cx="11" cy="3.500" r="1"/><circle cx="2" cy="6.500" r="1"/><circle cx="5" cy="6.500" r="1"/><circle cx="8" cy="6.500" r="1"/><circle cx="11" cy="6.500" r="1"/><circle cx="5" cy="9.500" r="1"/><circle cx="8" cy="9.500" r="1"/><circle cx="5" cy="0.800" r=".8"/><circle cx="8" cy="0.800" r=".8"/><circle cx="5" cy="12.500" r=".8"/><circle cx="8" cy="12.500" r=".8"/></svg>
<svg class="abs" style="left:342px;top:671.500px" width="13" height="13" viewBox="0 0 24 24" fill="none" stroke="#48484e" stroke-width="2.400" stroke-linecap="round" stroke-linejoin="round"><path d="M3 12a9 9 0 1 0 3-6.700L3 8"/><path d="M3 3v5h5"/></svg>
<svg class="abs" style="left:365px;top:670.500px" width="13" height="15" viewBox="0 0 13 15" fill="none" stroke="#48484e" stroke-width="1.500" stroke-linejoin="round"><path d="M0.800 3h11.400M4.500 3V1h4v2M2 3l.600 11h7.800L11 3M5.200 6v5.500M7.800 6v5.500"/></svg>
<!-- chat bubble -->
<div class="abs" style="left:1238.500px;top:689.500px;width:20px;height:11px;border-radius:2px;background:#fff;border:1px solid #f3f4f6"></div>
<svg class="abs" style="left:1244px;top:691px" width="9" height="8" viewBox="0 0 9 8" fill="none" stroke="#f6e0dc" stroke-width="1"><path d="M2.500 7V1.500M1 3l1.500-1.500L4 3M6.500 1v5.500M5 5l1.500 1.500L8 5"/></svg>
<div class="abs" style="left:1231.500px;top:656px;width:34px;height:34px;border-radius:50%;background:#2ea3ec"></div>
<svg class="abs" style="left:1238px;top:663px" width="21" height="21" viewBox="0 0 21 21" fill="none" stroke="#fff" stroke-width="1.500" stroke-linejoin="round" stroke-linecap="round"><path d="M3.500 2.500h14a1.200 1.200 0 0 1 1.200 1.200v9.600a1.200 1.200 0 0 1-1.200 1.200h-4.300l-2.700 2.700-2.700-2.700H3.500a1.200 1.200 0 0 1-1.200-1.200V3.700a1.200 1.200 0 0 1 1.200-1.200z"/><path d="M10.500 8v3.500" stroke-width="1.800"/><path d="M10.500 5.400v.1" stroke-width="2"/></svg>
<!-- cursor -->
<svg class="abs" style="left:763px;top:166px" width="7.500" height="10.500" viewBox="0 0 10 14"><path d="M1 1v10.500l2.600-2.300 1.700 3.900 1.700-.8-1.700-3.700h3.500z" fill="#111" stroke="#fff" stroke-width=".8"/></svg>
<!-- black bars -->
<div class="abs" style="left:0;top:0;width:1280px;height:12px;background:#000"></div>
<div class="abs" style="left:0;top:708px;width:1280px;height:12px;background:#000"></div>

</div>
</body>
</html>
